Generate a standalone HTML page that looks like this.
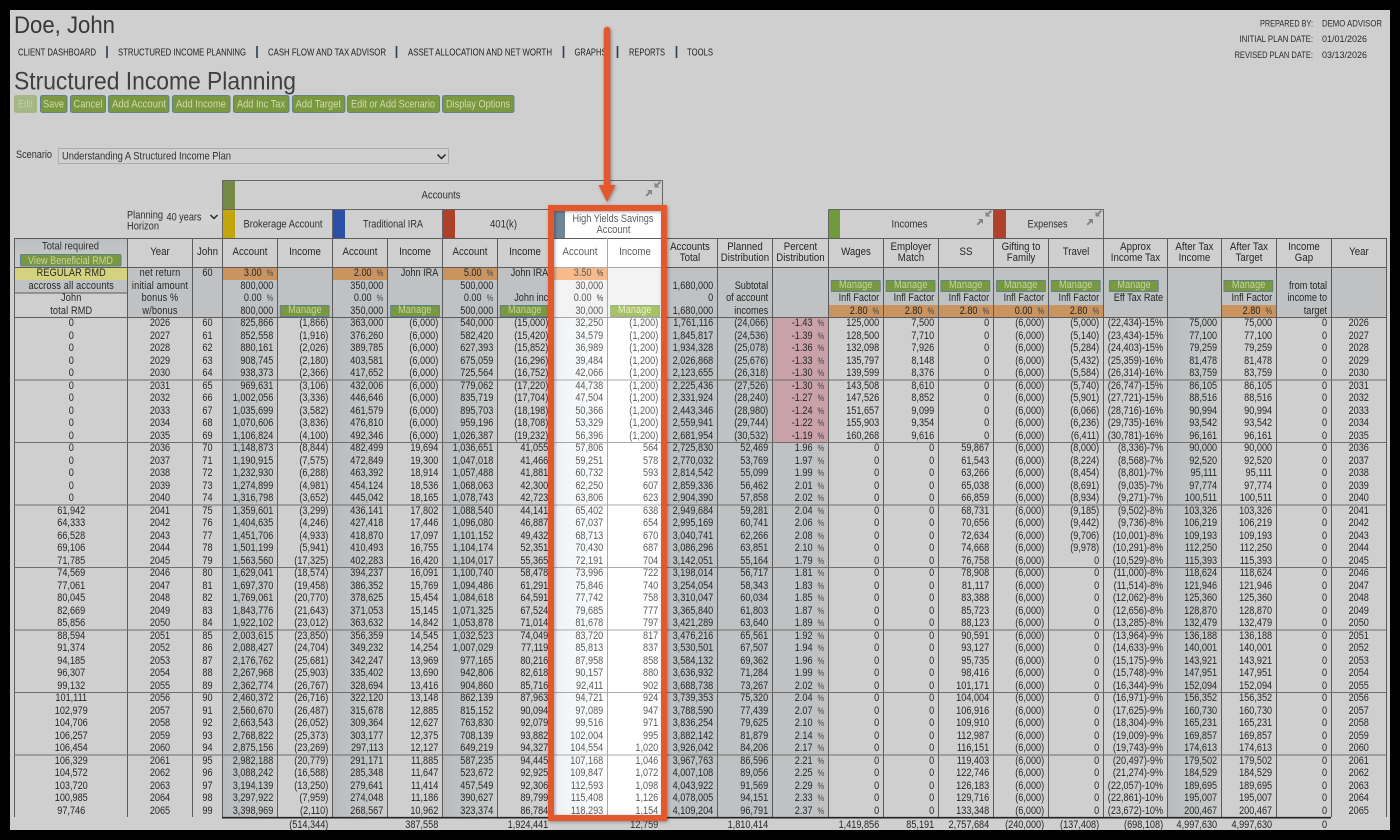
<!DOCTYPE html>
<html><head><meta charset="utf-8"><title>Structured Income Planning</title>
<style>
html,body{margin:0;padding:0;background:#000;width:1400px;height:840px;overflow:hidden}
svg{position:absolute;left:0;top:0}
text{font-family:"Liberation Sans",sans-serif;font-size:11px;fill:#303030}
.g{--k:.83;position:absolute;left:14.5px;width:calc(1371.5px/var(--k));transform:scaleX(var(--k));transform-origin:0 0;font:11px/12.5px "Liberation Sans",sans-serif;color:#262626}
ul{display:grid;height:12.5px;margin:0;padding:0;list-style:none;grid-template-columns:calc(112.5px/var(--k)) calc(65px/var(--k)) calc(30px/var(--k)) repeat(10,calc(55px/var(--k))) calc(56px/var(--k)) repeat(5,calc(55px/var(--k))) calc(64px/var(--k)) calc(54px/var(--k)) repeat(3,calc(55px/var(--k)))}
li{display:block;text-align:right;padding-right:5px;white-space:nowrap;min-width:0}
li:nth-child(-n+3),li:nth-child(24){text-align:center;padding-right:0}
li:nth-child(10),li:nth-child(11){color:#5c5c5c}
.t li:nth-child(11){color:#333}
b{font-weight:normal;font-size:9px;margin-left:3px;color:#444}
.s li:nth-child(-n+2){letter-spacing:.2px}
em{display:block;box-sizing:border-box;width:60px;height:11.5px;margin:.5px 0 0 3px;background:#7a983f;border:1px solid #5f8290;border-radius:1px;color:#c6d5a2;font:11px/9.5px "Liberation Sans",sans-serif;text-align:center;letter-spacing:.1px}
em.y{background:#a6c264;border-color:#9db08a;color:#e8efd0}
.h{--k:.88}
.h ul{height:29px;line-height:11px}
.h li{display:flex;align-items:center;justify-content:center;text-align:center;padding:0;height:29px}
</style></head>
<body>
<svg width="1400" height="840" viewBox="0 0 1400 840">
<defs>
<linearGradient id="a" x1="0" x2="1" y1="0" y2="0"><stop offset="0" stop-color="#b9bbbd"/><stop offset="1" stop-color="#cacbcb"/></linearGradient>
<linearGradient id="w" x1="0" x2="1" y1="0" y2="0"><stop offset="0" stop-color="#eef1f4"/><stop offset="1" stop-color="#ffffff"/></linearGradient>
<linearGradient id="v" x1="0" x2="0" y1="0" y2="1"><stop offset="0" stop-color="#bcbec0"/><stop offset="1" stop-color="#c9cacb"/></linearGradient>
</defs>
<rect x="10" y="10" width="1380" height="820" fill="#cfcfcf"/>
<rect x="222" y="317" width="55" height="500" fill="url(#a)"/>
<rect x="332" y="317" width="55" height="500" fill="url(#a)"/>
<rect x="442" y="317" width="55" height="500" fill="url(#a)"/>
<rect x="662" y="317" width="110" height="500" fill="#bfc1c3"/>
<rect x="772" y="317" width="56" height="500" fill="#bfc1c3"/>
<rect x="772" y="317" width="56" height="125" fill="#c9a2a9"/>
<rect x="1167" y="317" width="54" height="500" fill="url(#a)"/>
<rect x="14" y="238" width="113" height="29" fill="url(#v)"/>
<rect x="127" y="267" width="1259" height="50" fill="#bfc1c3"/>
<rect x="14" y="267" width="113" height="13" fill="#d4d27c"/>
<rect x="14" y="280" width="113" height="13" fill="#c0c2c4"/>
<rect x="222" y="267" width="55" height="13" fill="#c9945f"/>
<rect x="332" y="267" width="55" height="13" fill="#c9945f"/>
<rect x="442" y="267" width="55" height="13" fill="#c9945f"/>
<rect x="828" y="305" width="275" height="12.5" fill="#c9945f"/>
<rect x="1221" y="305" width="55" height="12.5" fill="#c9945f"/>
<rect x="552" y="209" width="110" height="29" fill="#fff"/>
<rect x="552" y="238" width="110" height="29" fill="#fff"/>
<rect x="552" y="267" width="110" height="50" fill="#f3f3f3"/>
<rect x="552" y="267" width="55" height="13" fill="#f6ba8b"/>
<rect x="552" y="317" width="55" height="500" fill="url(#w)"/>
<rect x="607" y="317" width="55" height="500" fill="#fff"/>
<rect x="222" y="180" width="13" height="29.5" fill="#768a46"/>
<rect x="222" y="209.5" width="13" height="28.5" fill="#c2a60c"/>
<rect x="332" y="209.5" width="13" height="28.5" fill="#2b50a6"/>
<rect x="442" y="209.5" width="13" height="28.5" fill="#ae412a"/>
<rect x="554" y="211" width="11" height="27" fill="#6f8598"/>
<rect x="828" y="209.5" width="12" height="28.5" fill="#6f9a3d"/>
<rect x="993" y="209.5" width="13" height="28.5" fill="#b0412a"/>
<path d="M222.5 180.5H662.5V209.5M222.5 209.5H552M828.5 209.5H1103.5V238M222.5 180.5V238M332.5 209.5V238M442.5 209.5V238M993.5 209.5V238M828.5 209.5V238" fill="none" stroke="#666"/>
<path d="M14.5 238.5H1386.5M14.5 267.5H1386.5M14.5 317.5H1386.5M14.5 293H127M14.5 238V817M127.5 238V817M192.5 238V817M222.5 238V817M277.5 238V817M332.5 238V817M387.5 238V817M442.5 238V817M497.5 238V817M552.5 238V817M662.5 238V817M717.5 238V817M772.5 238V817M828.5 238V817M883.5 238V817M938.5 238V817M993.5 238V817M1048.5 238V817M1103.5 238V817M1167.5 238V817M1221.5 238V817M1276.5 238V817M1331.5 238V817M1386.5 238V817" fill="none" stroke="#5c5c5c"/>
<path d="M14 380H552M14 442.5H552M14 505H552M14 567.5H552M14 630H552M14 692.5H552M14 755H552M662 380H1386M662 442.5H1386M662 505H1386M662 567.5H1386M662 630H1386M662 692.5H1386M662 755H1386" fill="none" stroke="#6e6e6e"/>
<path d="M552 380H662M552 442.5H662M552 505H662M552 567.5H662M552 630H662M552 692.5H662M552 755H662M607.5 238V817M552 267.5H662M552 317.5H662" fill="none" stroke="#a8a8a8"/>
<path d="M222 817.7H1331" fill="none" stroke="#222" stroke-width="1.6"/>
<text x="14" y="33" style="font-size:24.5px;fill:#383838" textLength="101" lengthAdjust="spacingAndGlyphs">Doe, John</text>
<text x="14" y="89.5" style="font-size:25px;fill:#404040" textLength="282" lengthAdjust="spacingAndGlyphs">Structured Income Planning</text>
<text x="18" y="55.5" style="font-size:10px;fill:#222" textLength="78" lengthAdjust="spacingAndGlyphs">CLIENT DASHBOARD</text>
<text x="118" y="55.5" style="font-size:10px;fill:#222" textLength="128" lengthAdjust="spacingAndGlyphs">STRUCTURED INCOME PLANNING</text>
<text x="268" y="55.5" style="font-size:10px;fill:#222" textLength="118" lengthAdjust="spacingAndGlyphs">CASH FLOW AND TAX ADVISOR</text>
<text x="408" y="55.5" style="font-size:10px;fill:#222" textLength="144" lengthAdjust="spacingAndGlyphs">ASSET ALLOCATION AND NET WORTH</text>
<text x="574.5" y="55.5" style="font-size:10px;fill:#222" textLength="32" lengthAdjust="spacingAndGlyphs">GRAPHS</text>
<text x="629" y="55.5" style="font-size:10px;fill:#222" textLength="36" lengthAdjust="spacingAndGlyphs">REPORTS</text>
<text x="687" y="55.5" style="font-size:10px;fill:#222" textLength="26" lengthAdjust="spacingAndGlyphs">TOOLS</text>
<path d="M107 46V58M257 46V58M396.5 46V58M563.5 46V58M617.5 46V58M676.5 46V58" stroke="#2b3c4e" stroke-width="1.6"/>
<text x="1260" y="26.5" style="font-size:9.5px;fill:#2a2a2a" textLength="53" lengthAdjust="spacingAndGlyphs">PREPARED BY:</text>
<text x="1322" y="26.5" style="font-size:9.5px;fill:#2a2a2a" textLength="60" lengthAdjust="spacingAndGlyphs">DEMO ADVISOR</text>
<text x="1239.5" y="42" style="font-size:9.5px;fill:#2a2a2a" textLength="73.5" lengthAdjust="spacingAndGlyphs">INITIAL PLAN DATE:</text>
<text x="1322" y="42" style="font-size:9.5px;fill:#2a2a2a" textLength="45" lengthAdjust="spacingAndGlyphs">01/01/2026</text>
<text x="1234.5" y="58" style="font-size:9.5px;fill:#2a2a2a" textLength="78.5" lengthAdjust="spacingAndGlyphs">REVISED PLAN DATE:</text>
<text x="1322" y="58" style="font-size:9.5px;fill:#2a2a2a" textLength="45" lengthAdjust="spacingAndGlyphs">03/13/2026</text>
<g stroke="#5f8290" stroke-width="1">
<rect x="14.5" y="95.5" width="22" height="17" rx="2" fill="#a4b784" stroke="#a4b784"/>
<rect x="40.5" y="95.5" width="26.5" height="17" rx="2" fill="#7a983f"/>
<rect x="70.5" y="95.5" width="35" height="17" rx="2" fill="#7a983f"/>
<rect x="108.5" y="95.5" width="60.5" height="17" rx="2" fill="#7a983f"/>
<rect x="172.5" y="95.5" width="57.5" height="17" rx="2" fill="#7a983f"/>
<rect x="233.5" y="95.5" width="55.5" height="17" rx="2" fill="#7a983f"/>
<rect x="292.5" y="95.5" width="52.5" height="17" rx="2" fill="#7a983f"/>
<rect x="347.5" y="95.5" width="92" height="17" rx="2" fill="#7a983f"/>
<rect x="442.5" y="95.5" width="71.5" height="17" rx="2" fill="#7a983f"/>
</g>
<text x="18" y="107.5" style="fill:#c0cfa8" textLength="15" lengthAdjust="spacingAndGlyphs">Edit</text>
<text x="43" y="107.5" style="fill:#d0dcae" textLength="21" lengthAdjust="spacingAndGlyphs">Save</text>
<text x="73.5" y="107.5" style="fill:#d0dcae" textLength="29" lengthAdjust="spacingAndGlyphs">Cancel</text>
<text x="112" y="107.5" style="fill:#d0dcae" textLength="54" lengthAdjust="spacingAndGlyphs">Add Account</text>
<text x="176" y="107.5" style="fill:#d0dcae" textLength="50" lengthAdjust="spacingAndGlyphs">Add Income</text>
<text x="237" y="107.5" style="fill:#d0dcae" textLength="48" lengthAdjust="spacingAndGlyphs">Add Inc Tax</text>
<text x="295.5" y="107.5" style="fill:#d0dcae" textLength="45.5" lengthAdjust="spacingAndGlyphs">Add Target</text>
<text x="351" y="107.5" style="fill:#d0dcae" textLength="84" lengthAdjust="spacingAndGlyphs">Edit or Add Scenario</text>
<text x="446" y="107.5" style="fill:#d0dcae" textLength="64" lengthAdjust="spacingAndGlyphs">Display Options</text>
<text x="16" y="158" textLength="36" lengthAdjust="spacingAndGlyphs">Scenario</text>
<rect x="58.5" y="148.5" width="390" height="15" rx="1" fill="#d0d0d0" stroke="#ababab"/>
<text x="62" y="159.5" textLength="169" lengthAdjust="spacingAndGlyphs">Understanding A Structured Income Plan</text>
<path d="M437.5 154.5L441.5 158.5L445.5 154.5" fill="none" stroke="#222" stroke-width="1.5"/>
<text x="421.5" y="198.5" textLength="39" lengthAdjust="spacingAndGlyphs">Accounts</text>
<text x="243.5" y="227.5" textLength="79" lengthAdjust="spacingAndGlyphs">Brokerage Account</text>
<text x="363" y="227.5" textLength="60" lengthAdjust="spacingAndGlyphs">Traditional IRA</text>
<text x="490" y="227.5" textLength="27" lengthAdjust="spacingAndGlyphs">401(k)</text>
<text x="572.5" y="222" style="fill:#5c5c5c" textLength="81" lengthAdjust="spacingAndGlyphs">High Yields Savings</text>
<text x="596.5" y="233" style="fill:#5c5c5c" textLength="34" lengthAdjust="spacingAndGlyphs">Account</text>
<text x="891.5" y="227.5" textLength="36" lengthAdjust="spacingAndGlyphs">Incomes</text>
<text x="1027.5" y="227.5" textLength="40" lengthAdjust="spacingAndGlyphs">Expenses</text>
<text x="127" y="218.5" textLength="36" lengthAdjust="spacingAndGlyphs">Planning</text>
<text x="127" y="229.5" textLength="32" lengthAdjust="spacingAndGlyphs">Horizon</text>
<rect x="163.5" y="209.5" width="58.5" height="14.5" fill="#d2d2d2"/>
<text x="166.5" y="220.5" textLength="35" lengthAdjust="spacingAndGlyphs">40 years</text>
<path d="M210.5 215L214 218.5L217.5 215" fill="none" stroke="#222" stroke-width="1.4"/>
<g fill="#858585" stroke="none">
<g id="ic1"><path d="M654.5 187.5V182.5L656.3 184.3L659.6 181L661 182.4L657.7 185.7L659.5 187.5Z"/><path d="M652 190V195L650.2 193.2L646.9 196.5L645.5 195.1L648.8 191.8L647 190Z"/></g>
<g transform="translate(331,29)"><path d="M654.5 187.5V182.5L656.3 184.3L659.6 181L661 182.4L657.7 185.7L659.5 187.5Z"/><path d="M652 190V195L650.2 193.2L646.9 196.5L645.5 195.1L648.8 191.8L647 190Z"/></g>
<g transform="translate(441,29)"><path d="M654.5 187.5V182.5L656.3 184.3L659.6 181L661 182.4L657.7 185.7L659.5 187.5Z"/><path d="M652 190V195L650.2 193.2L646.9 196.5L645.5 195.1L648.8 191.8L647 190Z"/></g>
</g>
<text x="42" y="249.5" textLength="57" lengthAdjust="spacingAndGlyphs">Total required</text>
<rect x="20.5" y="254.5" width="100.5" height="11.5" rx="1" fill="#7a983f" stroke="#5f8290"/>
<text x="28" y="264" style="fill:#c6d5a2" textLength="85" lengthAdjust="spacingAndGlyphs">View Beneficial RMD</text>
</svg>

<div class="g h" style="top:238px"><ul><li><li>Year<li>John<li>Account<li>Income<li>Account<li>Income<li>Account<li>Income<li>Account<li>Income<li>Accounts<br>Total<li>Planned<br>Distribution<li>Percent<br>Distribution<li>Wages<li>Employer<br>Match<li>SS<li>Gifting to<br>Family<li>Travel<li>Approx<br>Income Tax<li>After Tax<br>Income<li>After Tax<br>Target<li>Income<br>Gap<li>Year</ul></div>

<div class="g s" style="top:267px">
<ul><li>REGULAR RMD<li>net return<li>60<li>3.00 <b>%</b><li><li>2.00 <b>%</b><li>John IRA<li>5.00 <b>%</b><li>John IRA<li>3.50 <b>%</b><li><li><li><li><li><li><li><li><li><li><li><li><li><li></ul>
<ul><li>accross all accounts<li>initial amount<li><li>800,000<li><li>350,000<li><li>500,000<li><li>30,000<li><li>1,680,000<li>Subtotal<li><li><em>Manage</em><li><em>Manage</em><li><em>Manage</em><li><em>Manage</em><li><em>Manage</em><li><em style="margin-left:7px">Manage</em><li><li><em>Manage</em><li>from total<li></ul>
<ul><li>John<li>bonus %<li><li>0.00 <b>%</b><li><li>0.00 <b>%</b><li><li>0.00 <b>%</b><li>John inc<li>0.00 <b>%</b><li><li>0<li>of account<li><li>Infl Factor<li>Infl Factor<li>Infl Factor<li>Infl Factor<li>Infl Factor<li>Eff Tax Rate<li><li>Infl Factor<li>income to<li></ul>
<ul><li>total RMD<li>w/bonus<li><li>800,000<li><em>Manage</em><li>350,000<li><em>Manage</em><li>500,000<li><em>Manage</em><li>30,000<li><em class="y">Manage</em><li>1,680,000<li>incomes<li><li>2.80 <b>%</b><li>2.80 <b>%</b><li>2.80 <b>%</b><li>0.00 <b>%</b><li>2.80 <b>%</b><li><li><li>2.80 <b>%</b><li>target<li></ul>
</div>

<div class="g" style="top:317px">
<ul><li>0<li>2026<li>60<li>825,866<li>(1,866)<li>363,000<li>(6,000)<li>540,000<li>(15,000)<li>32,250<li>(1,200)<li>1,761,116<li>(24,066)<li>-1.43 <b>%</b><li>125,000<li>7,500<li>0<li>(6,000)<li>(5,000)<li>(22,434)-15%<li>75,000<li>75,000<li>0<li>2026</ul>
<ul><li>0<li>2027<li>61<li>852,558<li>(1,916)<li>376,260<li>(6,000)<li>582,420<li>(15,420)<li>34,579<li>(1,200)<li>1,845,817<li>(24,536)<li>-1.39 <b>%</b><li>128,500<li>7,710<li>0<li>(6,000)<li>(5,140)<li>(23,434)-15%<li>77,100<li>77,100<li>0<li>2027</ul>
<ul><li>0<li>2028<li>62<li>880,161<li>(2,026)<li>389,785<li>(6,000)<li>627,393<li>(15,852)<li>36,989<li>(1,200)<li>1,934,328<li>(25,078)<li>-1.36 <b>%</b><li>132,098<li>7,926<li>0<li>(6,000)<li>(5,284)<li>(24,403)-15%<li>79,259<li>79,259<li>0<li>2028</ul>
<ul><li>0<li>2029<li>63<li>908,745<li>(2,180)<li>403,581<li>(6,000)<li>675,059<li>(16,296)<li>39,484<li>(1,200)<li>2,026,868<li>(25,676)<li>-1.33 <b>%</b><li>135,797<li>8,148<li>0<li>(6,000)<li>(5,432)<li>(25,359)-16%<li>81,478<li>81,478<li>0<li>2029</ul>
<ul><li>0<li>2030<li>64<li>938,373<li>(2,366)<li>417,652<li>(6,000)<li>725,564<li>(16,752)<li>42,066<li>(1,200)<li>2,123,655<li>(26,318)<li>-1.30 <b>%</b><li>139,599<li>8,376<li>0<li>(6,000)<li>(5,584)<li>(26,314)-16%<li>83,759<li>83,759<li>0<li>2030</ul>
<ul><li>0<li>2031<li>65<li>969,631<li>(3,106)<li>432,006<li>(6,000)<li>779,062<li>(17,220)<li>44,738<li>(1,200)<li>2,225,436<li>(27,526)<li>-1.30 <b>%</b><li>143,508<li>8,610<li>0<li>(6,000)<li>(5,740)<li>(26,747)-15%<li>86,105<li>86,105<li>0<li>2031</ul>
<ul><li>0<li>2032<li>66<li>1,002,056<li>(3,336)<li>446,646<li>(6,000)<li>835,719<li>(17,704)<li>47,504<li>(1,200)<li>2,331,924<li>(28,240)<li>-1.27 <b>%</b><li>147,526<li>8,852<li>0<li>(6,000)<li>(5,901)<li>(27,721)-15%<li>88,516<li>88,516<li>0<li>2032</ul>
<ul><li>0<li>2033<li>67<li>1,035,699<li>(3,582)<li>461,579<li>(6,000)<li>895,703<li>(18,198)<li>50,366<li>(1,200)<li>2,443,346<li>(28,980)<li>-1.24 <b>%</b><li>151,657<li>9,099<li>0<li>(6,000)<li>(6,066)<li>(28,716)-16%<li>90,994<li>90,994<li>0<li>2033</ul>
<ul><li>0<li>2034<li>68<li>1,070,606<li>(3,836)<li>476,810<li>(6,000)<li>959,196<li>(18,708)<li>53,329<li>(1,200)<li>2,559,941<li>(29,744)<li>-1.22 <b>%</b><li>155,903<li>9,354<li>0<li>(6,000)<li>(6,236)<li>(29,735)-16%<li>93,542<li>93,542<li>0<li>2034</ul>
<ul><li>0<li>2035<li>69<li>1,106,824<li>(4,100)<li>492,346<li>(6,000)<li>1,026,387<li>(19,232)<li>56,396<li>(1,200)<li>2,681,954<li>(30,532)<li>-1.19 <b>%</b><li>160,268<li>9,616<li>0<li>(6,000)<li>(6,411)<li>(30,781)-16%<li>96,161<li>96,161<li>0<li>2035</ul>
<ul><li>0<li>2036<li>70<li>1,148,873<li>(8,844)<li>482,499<li>19,694<li>1,036,651<li>41,055<li>57,806<li>564<li>2,725,830<li>52,469<li>1.96 <b>%</b><li>0<li>0<li>59,867<li>(6,000)<li>(8,000)<li>(8,336)-7%<li>90,000<li>90,000<li>0<li>2036</ul>
<ul><li>0<li>2037<li>71<li>1,190,915<li>(7,575)<li>472,849<li>19,300<li>1,047,018<li>41,466<li>59,251<li>578<li>2,770,032<li>53,769<li>1.97 <b>%</b><li>0<li>0<li>61,543<li>(6,000)<li>(8,224)<li>(8,568)-7%<li>92,520<li>92,520<li>0<li>2037</ul>
<ul><li>0<li>2038<li>72<li>1,232,930<li>(6,288)<li>463,392<li>18,914<li>1,057,488<li>41,881<li>60,732<li>593<li>2,814,542<li>55,099<li>1.99 <b>%</b><li>0<li>0<li>63,266<li>(6,000)<li>(8,454)<li>(8,801)-7%<li>95,111<li>95,111<li>0<li>2038</ul>
<ul><li>0<li>2039<li>73<li>1,274,899<li>(4,981)<li>454,124<li>18,536<li>1,068,063<li>42,300<li>62,250<li>607<li>2,859,336<li>56,462<li>2.01 <b>%</b><li>0<li>0<li>65,038<li>(6,000)<li>(8,691)<li>(9,035)-7%<li>97,774<li>97,774<li>0<li>2039</ul>
<ul><li>0<li>2040<li>74<li>1,316,798<li>(3,652)<li>445,042<li>18,165<li>1,078,743<li>42,723<li>63,806<li>623<li>2,904,390<li>57,858<li>2.02 <b>%</b><li>0<li>0<li>66,859<li>(6,000)<li>(8,934)<li>(9,271)-7%<li>100,511<li>100,511<li>0<li>2040</ul>
<ul><li>61,942<li>2041<li>75<li>1,359,601<li>(3,299)<li>436,141<li>17,802<li>1,088,540<li>44,141<li>65,402<li>638<li>2,949,684<li>59,281<li>2.04 <b>%</b><li>0<li>0<li>68,731<li>(6,000)<li>(9,185)<li>(9,502)-8%<li>103,326<li>103,326<li>0<li>2041</ul>
<ul><li>64,333<li>2042<li>76<li>1,404,635<li>(4,246)<li>427,418<li>17,446<li>1,096,080<li>46,887<li>67,037<li>654<li>2,995,169<li>60,741<li>2.06 <b>%</b><li>0<li>0<li>70,656<li>(6,000)<li>(9,442)<li>(9,736)-8%<li>106,219<li>106,219<li>0<li>2042</ul>
<ul><li>66,528<li>2043<li>77<li>1,451,706<li>(4,933)<li>418,870<li>17,097<li>1,101,152<li>49,432<li>68,713<li>670<li>3,040,741<li>62,266<li>2.08 <b>%</b><li>0<li>0<li>72,634<li>(6,000)<li>(9,706)<li>(10,001)-8%<li>109,193<li>109,193<li>0<li>2043</ul>
<ul><li>69,106<li>2044<li>78<li>1,501,199<li>(5,941)<li>410,493<li>16,755<li>1,104,174<li>52,351<li>70,430<li>687<li>3,086,296<li>63,851<li>2.10 <b>%</b><li>0<li>0<li>74,668<li>(6,000)<li>(9,978)<li>(10,291)-8%<li>112,250<li>112,250<li>0<li>2044</ul>
<ul><li>71,785<li>2045<li>79<li>1,563,560<li>(17,325)<li>402,283<li>16,420<li>1,104,017<li>55,365<li>72,191<li>704<li>3,142,051<li>55,164<li>1.79 <b>%</b><li>0<li>0<li>76,758<li>(6,000)<li>0<li>(10,529)-8%<li>115,393<li>115,393<li>0<li>2045</ul>
<ul><li>74,569<li>2046<li>80<li>1,629,041<li>(18,574)<li>394,237<li>16,091<li>1,100,740<li>58,478<li>73,996<li>722<li>3,198,014<li>56,717<li>1.81 <b>%</b><li>0<li>0<li>78,908<li>(6,000)<li>0<li>(11,000)-8%<li>118,624<li>118,624<li>0<li>2046</ul>
<ul><li>77,061<li>2047<li>81<li>1,697,370<li>(19,458)<li>386,352<li>15,769<li>1,094,486<li>61,291<li>75,846<li>740<li>3,254,054<li>58,343<li>1.83 <b>%</b><li>0<li>0<li>81,117<li>(6,000)<li>0<li>(11,514)-8%<li>121,946<li>121,946<li>0<li>2047</ul>
<ul><li>80,045<li>2048<li>82<li>1,769,061<li>(20,770)<li>378,625<li>15,454<li>1,084,618<li>64,591<li>77,742<li>758<li>3,310,047<li>60,034<li>1.85 <b>%</b><li>0<li>0<li>83,388<li>(6,000)<li>0<li>(12,062)-8%<li>125,360<li>125,360<li>0<li>2048</ul>
<ul><li>82,669<li>2049<li>83<li>1,843,776<li>(21,643)<li>371,053<li>15,145<li>1,071,325<li>67,524<li>79,685<li>777<li>3,365,840<li>61,803<li>1.87 <b>%</b><li>0<li>0<li>85,723<li>(6,000)<li>0<li>(12,656)-8%<li>128,870<li>128,870<li>0<li>2049</ul>
<ul><li>85,856<li>2050<li>84<li>1,922,102<li>(23,012)<li>363,632<li>14,842<li>1,053,878<li>71,014<li>81,678<li>797<li>3,421,289<li>63,640<li>1.89 <b>%</b><li>0<li>0<li>88,123<li>(6,000)<li>0<li>(13,285)-8%<li>132,479<li>132,479<li>0<li>2050</ul>
<ul><li>88,594<li>2051<li>85<li>2,003,615<li>(23,850)<li>356,359<li>14,545<li>1,032,523<li>74,049<li>83,720<li>817<li>3,476,216<li>65,561<li>1.92 <b>%</b><li>0<li>0<li>90,591<li>(6,000)<li>0<li>(13,964)-9%<li>136,188<li>136,188<li>0<li>2051</ul>
<ul><li>91,374<li>2052<li>86<li>2,088,427<li>(24,704)<li>349,232<li>14,254<li>1,007,029<li>77,119<li>85,813<li>837<li>3,530,501<li>67,507<li>1.94 <b>%</b><li>0<li>0<li>93,127<li>(6,000)<li>0<li>(14,633)-9%<li>140,001<li>140,001<li>0<li>2052</ul>
<ul><li>94,185<li>2053<li>87<li>2,176,762<li>(25,681)<li>342,247<li>13,969<li>977,165<li>80,216<li>87,958<li>858<li>3,584,132<li>69,362<li>1.96 <b>%</b><li>0<li>0<li>95,735<li>(6,000)<li>0<li>(15,175)-9%<li>143,921<li>143,921<li>0<li>2053</ul>
<ul><li>96,307<li>2054<li>88<li>2,267,968<li>(25,903)<li>335,402<li>13,690<li>942,806<li>82,618<li>90,157<li>880<li>3,636,932<li>71,284<li>1.99 <b>%</b><li>0<li>0<li>98,416<li>(6,000)<li>0<li>(15,748)-9%<li>147,951<li>147,951<li>0<li>2054</ul>
<ul><li>99,132<li>2055<li>89<li>2,362,774<li>(26,767)<li>328,694<li>13,416<li>904,860<li>85,716<li>92,411<li>902<li>3,688,738<li>73,267<li>2.02 <b>%</b><li>0<li>0<li>101,171<li>(6,000)<li>0<li>(16,344)-9%<li>152,094<li>152,094<li>0<li>2055</ul>
<ul><li>101,111<li>2056<li>90<li>2,460,372<li>(26,716)<li>322,120<li>13,148<li>862,139<li>87,963<li>94,721<li>924<li>3,739,353<li>75,320<li>2.04 <b>%</b><li>0<li>0<li>104,004<li>(6,000)<li>0<li>(16,971)-9%<li>156,352<li>156,352<li>0<li>2056</ul>
<ul><li>102,979<li>2057<li>91<li>2,560,670<li>(26,487)<li>315,678<li>12,885<li>815,152<li>90,094<li>97,089<li>947<li>3,788,590<li>77,439<li>2.07 <b>%</b><li>0<li>0<li>106,916<li>(6,000)<li>0<li>(17,625)-9%<li>160,730<li>160,730<li>0<li>2057</ul>
<ul><li>104,706<li>2058<li>92<li>2,663,543<li>(26,052)<li>309,364<li>12,627<li>763,830<li>92,079<li>99,516<li>971<li>3,836,254<li>79,625<li>2.10 <b>%</b><li>0<li>0<li>109,910<li>(6,000)<li>0<li>(18,304)-9%<li>165,231<li>165,231<li>0<li>2058</ul>
<ul><li>106,257<li>2059<li>93<li>2,768,822<li>(25,373)<li>303,177<li>12,375<li>708,139<li>93,882<li>102,004<li>995<li>3,882,142<li>81,879<li>2.14 <b>%</b><li>0<li>0<li>112,987<li>(6,000)<li>0<li>(19,009)-9%<li>169,857<li>169,857<li>0<li>2059</ul>
<ul><li>106,454<li>2060<li>94<li>2,875,156<li>(23,269)<li>297,113<li>12,127<li>649,219<li>94,327<li>104,554<li>1,020<li>3,926,042<li>84,206<li>2.17 <b>%</b><li>0<li>0<li>116,151<li>(6,000)<li>0<li>(19,743)-9%<li>174,613<li>174,613<li>0<li>2060</ul>
<ul><li>106,329<li>2061<li>95<li>2,982,188<li>(20,779)<li>291,171<li>11,885<li>587,235<li>94,445<li>107,168<li>1,046<li>3,967,763<li>86,596<li>2.21 <b>%</b><li>0<li>0<li>119,403<li>(6,000)<li>0<li>(20,497)-9%<li>179,502<li>179,502<li>0<li>2061</ul>
<ul><li>104,572<li>2062<li>96<li>3,088,242<li>(16,588)<li>285,348<li>11,647<li>523,672<li>92,925<li>109,847<li>1,072<li>4,007,108<li>89,056<li>2.25 <b>%</b><li>0<li>0<li>122,746<li>(6,000)<li>0<li>(21,274)-9%<li>184,529<li>184,529<li>0<li>2062</ul>
<ul><li>103,720<li>2063<li>97<li>3,194,139<li>(13,250)<li>279,641<li>11,414<li>457,549<li>92,306<li>112,593<li>1,098<li>4,043,922<li>91,569<li>2.29 <b>%</b><li>0<li>0<li>126,183<li>(6,000)<li>0<li>(22,057)-10%<li>189,695<li>189,695<li>0<li>2063</ul>
<ul><li>100,985<li>2064<li>98<li>3,297,922<li>(7,959)<li>274,048<li>11,186<li>390,627<li>89,799<li>115,408<li>1,126<li>4,078,005<li>94,151<li>2.33 <b>%</b><li>0<li>0<li>129,716<li>(6,000)<li>0<li>(22,861)-10%<li>195,007<li>195,007<li>0<li>2064</ul>
<ul><li>97,746<li>2065<li>99<li>3,398,969<li>(2,110)<li>268,567<li>10,962<li>323,374<li>86,784<li>118,293<li>1,154<li>4,109,204<li>96,791<li>2.37 <b>%</b><li>0<li>0<li>133,348<li>(6,000)<li>0<li>(23,672)-10%<li>200,467<li>200,467<li>0<li>2065</ul>
</div>

<div class="g t" style="top:818.75px"><ul><li><li><li><li><li>(514,344)<li><li>387,558<li><li>1,924,441<li><li>12,759<li><li>1,810,414<li><li>1,419,856<li>85,191<li>2,757,684<li>(240,000)<li>(137,408)<li>(698,108)<li>4,997,630<li>4,997,630<li>0<li></ul></div>

<svg width="1400" height="840" viewBox="0 0 1400 840" style="filter:drop-shadow(1px 1px 1.5px rgba(0,0,0,.35))">
<rect x="551" y="208" width="113" height="610" fill="none" stroke="#e5582e" stroke-width="6"/>
<path d="M607 30V190" stroke="#e5582e" stroke-width="6.5" stroke-linecap="round"/>
<path d="M598.5 185H615.5L607 202Z" fill="#e5582e"/>
</svg>
</body></html>
